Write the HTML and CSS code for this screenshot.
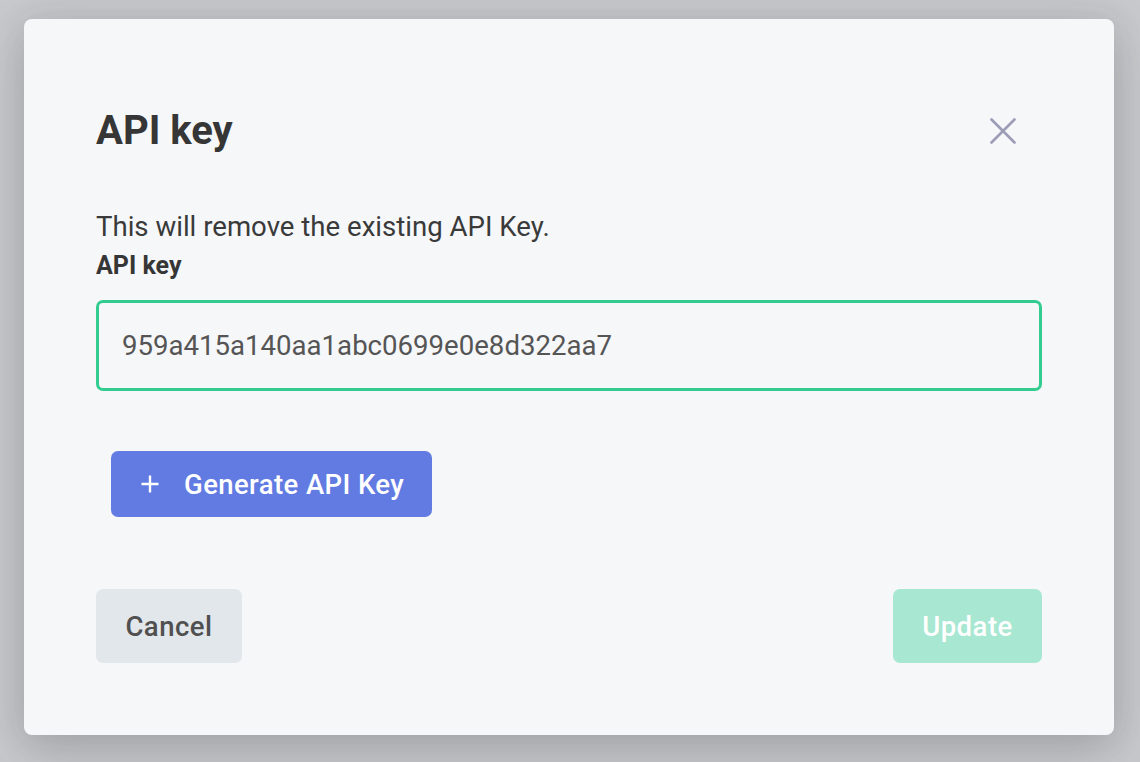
FILE: index.html
```html
<!DOCTYPE html>
<html lang="en">
<head>
<meta charset="utf-8">
<title>API key</title>
<link rel="stylesheet" href="styles.css">
</head>
<body>
<div class="backdrop">
  <div class="modal">
    <div class="modal-header">
      <h2 class="modal-title">API key</h2>
      <button class="close-btn" aria-label="Close">
        <svg viewBox="0 0 26 26" width="26" height="26"><path d="M1.5 1.5 L24.5 24.5 M24.5 1.5 L1.5 24.5" stroke="#9b9cb6" stroke-width="2.6" stroke-linecap="round" fill="none"/></svg>
      </button>
    </div>
    <p class="desc">This will remove the existing API Key.</p>
    <label class="field-label">API key</label>
    <div class="input-box">959a415a140aa1abc0699e0e8d322aa7</div>
    <div class="gen-row">
      <button class="btn-generate">
        <svg viewBox="0 0 20 20" width="20" height="20"><path d="M10 1.5 V18.5 M1.5 10 H18.5" stroke="#fff" stroke-width="2.4" fill="none"/></svg>
        <span>Generate API Key</span>
      </button>
    </div>
    <div class="modal-footer">
      <button class="btn-cancel">Cancel</button>
      <button class="btn-update">Update</button>
    </div>
  </div>
</div>
</body>
</html>
```

FILE: styles.css
```css
* { box-sizing: border-box; }
html, body {
  margin: 0;
  padding: 0;
  height: 100%;
}
body {
  background: #c8c9cc;
  font-family: Roboto, "Liberation Sans", sans-serif;
  overflow: hidden;
}
.backdrop {
  padding: 19px 26px 0 24px;
}
.modal {
  width: 1090px;
  background: #f6f7f9;
  border-radius: 8px;
  padding: 88px 72px 72px 72px;
  box-shadow: 0 18px 50px rgba(60, 60, 70, 0.22), 0 0 30px rgba(60, 60, 70, 0.10);
  display: flex;
  flex-direction: column;
}
.modal-header {
  display: flex;
  align-items: center;
  justify-content: space-between;
}
.modal-title {
  margin: 0;
  font-size: 40px;
  line-height: 48px;
  font-weight: 700;
  color: #363636;
}
.close-btn {
  width: 26px;
  height: 26px;
  padding: 0;
  border: none;
  background: transparent;
  margin-right: 26px;
  display: flex;
}
.desc {
  margin: 51px 0 0 0;
  font-size: 27.6px;
  line-height: 42px;
  color: #3a3a3a;
}
.field-label {
  display: block;
  margin-top: 0;
  font-size: 25px;
  line-height: 36px;
  font-weight: 700;
  color: #363636;
}
.input-box {
  margin-top: 16px;
  height: 91px;
  border: 3px solid #33cc90;
  border-radius: 7px;
  padding: 0 23px;
  display: flex;
  align-items: center;
  font-size: 27.6px;
  color: #555555;
}
.gen-row {
  margin-top: 60px;
  display: flex;
  padding-left: 15px;
}
.btn-generate {
  height: 66px;
  width: 321px;
  background: #627be2;
  border: none;
  border-radius: 7px;
  color: #ffffff;
  display: flex;
  align-items: center;
  gap: 24px;
  padding: 0 0 0 29px;
  font-family: inherit;
  font-size: 27.5px;
  font-weight: 500;
  letter-spacing: 0.4px;
}
.btn-generate svg { flex: none; }
.modal-footer {
  margin-top: 72px;
  display: flex;
  justify-content: space-between;
}
.btn-cancel, .btn-update {
  height: 74px;
  border: none;
  border-radius: 7px;
  font-family: inherit;
  font-size: 27.5px;
  font-weight: 500;
  letter-spacing: 0.5px;
}
.btn-cancel {
  width: 146px;
  background: #e2e7eb;
  color: #505050;
}
.btn-update {
  width: 149px;
  background: #a8e7d1;
  color: #ffffff;
}
```
